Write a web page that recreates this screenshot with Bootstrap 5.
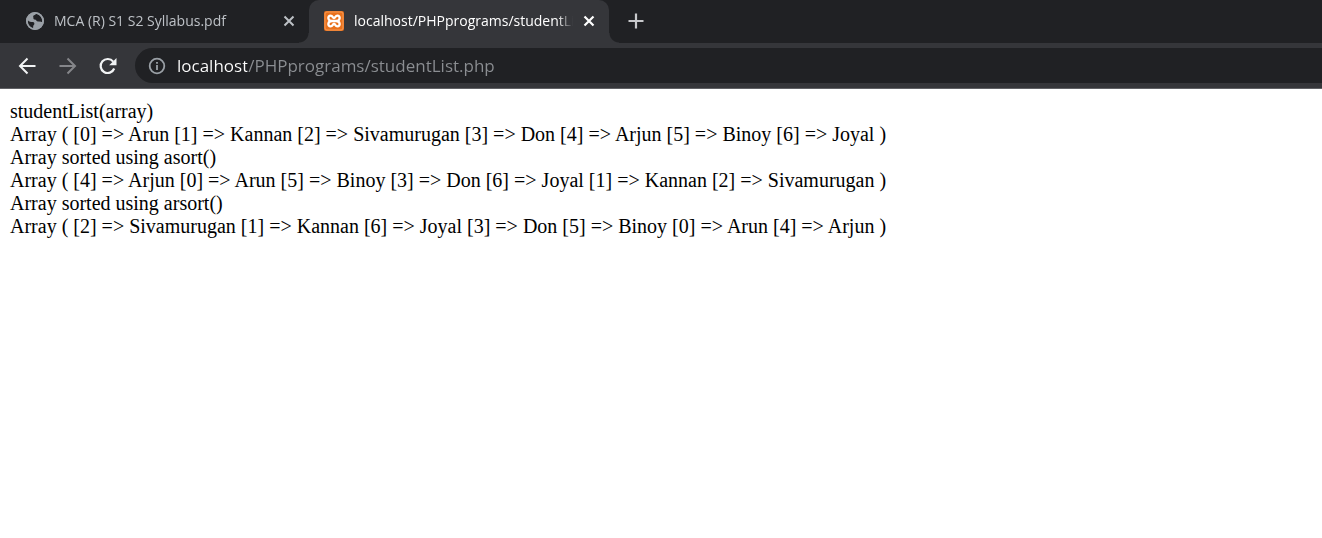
<!DOCTYPE html>
<html lang="en">
<head>
<meta charset="utf-8">
<meta name="viewport" content="width=device-width, initial-scale=1">
<title>localhost/PHPprograms/studentList.php</title>
<link href="https://cdn.jsdelivr.net/npm/bootstrap@5.3.0/dist/css/bootstrap.min.css" rel="stylesheet">
<style>
  :root { --strip: #202124; --toolbar: #35363a; }
  body { font-family: "Open Sans", "Noto Sans", sans-serif; color: #000; }
  .tab-strip { height: 43px; background: var(--strip); padding-left: 9px; }
  .browser-tab { position: relative; width: 300px; min-width: 0; height: 43px; padding: 0 10px 2px 15px; gap: 10px; color: #bdc1c6; }
  .browser-tab.current { background: var(--toolbar); border-radius: 10px 10px 0 0; color: #fff; }
  /* curved feet joining the current tab to the toolbar */
  .browser-tab.current::before, .browser-tab.current::after { content: ""; position: absolute; bottom: 0; width: 10px; height: 10px; }
  .browser-tab.current::before { right: 100%; background: radial-gradient(circle at 0 0, transparent 9px, var(--toolbar) 10px); }
  .browser-tab.current::after { left: 100%; background: radial-gradient(circle at 100% 0, transparent 9px, var(--toolbar) 10px); }
  .tab-title { min-width: 0; font-size: 14px; line-height: 20px; color: inherit; mask-image: linear-gradient(to left, transparent, #000 16px); -webkit-mask-image: linear-gradient(to left, transparent, #000 16px); }
  .icon-btn { padding: 0; border: 0; background: none; color: #f1f3f4; line-height: 0; flex: none; }
  .icon-btn:disabled { color: #85868a; }
  .tab-close { color: inherit; margin-left: -4px; }
  .new-tab { margin-left: 17px; padding-bottom: 2px; color: #c8c9cc; }
  .toolbar { height: 46px; background: var(--toolbar); border-bottom: 1px solid #606165; padding-left: 17px; gap: 20px; }
  .address { height: 35px; margin-left: -2px; padding-left: 13px; gap: 11px; background: var(--strip); border-radius: 18px 0 0 18px; color: #9aa0a6; }
  .address input { min-width: 0; padding: 0; border: 0; outline: 0; font-size: 17px; line-height: 24px;
    background: linear-gradient(to right, #fff 70px, #8b8e92 70px); -webkit-background-clip: text; background-clip: text; -webkit-text-fill-color: transparent; }
  .page-body { padding: 11px 10px; font-family: "Liberation Serif", serif; font-size: 20px; line-height: 23px; }
</style>
</head>
<body class="bg-white">
<header>
  <nav class="tab-strip d-flex align-items-center" aria-label="Tabs">
    <div class="browser-tab d-flex align-items-center">
      <svg class="flex-shrink-0" width="20" height="20" viewBox="0 0 20 20" aria-hidden="true">
        <circle cx="11" cy="10" r="9" fill="#9aa0a6"/>
        <path d="M3.800 9.200c1.400 1.800 3 1.900 5 1.900 1.500 0 1.700 1.300 1.500 2.200-.2.900-1.200 1-1.100 2.100.1.800-.2 1.600-.2 2C5.500 16.400 3.500 13.400 3.800 9.200zM12 2.700c-.4 1.400-1.900 1.300-2.600 2-.6.700.2 1.600 0 2.200-.2.800.4 1.500 1.400 1.500 1.500 0 1.500 2.300 3.400 2.200 1.500-.1 2.200.5 4 .4.5-4-2.200-7.600-6.200-8.300z" fill="#202124"/>
        <circle cx="11" cy="10" r="8.100" fill="none" stroke="#9aa0a6" stroke-width="1.700"/>
      </svg>
      <a href="#" class="tab-title text-decoration-none text-nowrap overflow-hidden flex-grow-1">MCA (R) S1 S2 Syllabus.pdf</a>
      <button class="icon-btn tab-close" type="button" aria-label="Close tab"><svg width="20" height="20" viewBox="0 0 20 20" fill="none" stroke="currentColor" stroke-width="2"><path d="M5.500 5.500l9 9M14.500 5.500l-9 9"/></svg></button>
    </div>
    <div class="browser-tab current d-flex align-items-center">
      <svg class="flex-shrink-0" width="20" height="20" viewBox="0 0 20 20" aria-hidden="true">
        <rect width="20" height="20" rx="2" fill="#e9711c"/>
        <rect x="1" y="1" width="18" height="18" rx="2" fill="none" stroke="#f59a55" stroke-width="1"/>
        <path d="M7.500 10H12.500M8 10C3.500 10 3.300 4.700 6.600 4.700c2.300 0 2 2.300 3.400 2.300s1.100-2.300 3.400-2.300c3.300 0 3.100 5.300-1.400 5.300M8 10c-4.500 0-4.700 5.300-1.400 5.300 2.300 0 2-2.300 3.400-2.300s1.100 2.300 3.400 2.300c3.300 0 3.100-5.300-1.400-5.300" fill="none" stroke="#fff" stroke-width="2.300" stroke-linejoin="round"/>
      </svg>
      <a href="#" aria-current="page" class="tab-title text-decoration-none text-nowrap overflow-hidden flex-grow-1">localhost/PHPprograms/studentList.php</a>
      <button class="icon-btn tab-close" type="button" aria-label="Close tab"><svg width="20" height="20" viewBox="0 0 20 20" fill="none" stroke="currentColor" stroke-width="2.200"><path d="M5.500 5.500l9 9M14.500 5.500l-9 9"/></svg></button>
    </div>
    <button class="icon-btn new-tab" type="button" aria-label="New tab"><svg width="20" height="20" viewBox="0 0 20 20" fill="none" stroke="currentColor" stroke-width="2.200"><path d="M10 2.500v15M2.500 10h15"/></svg></button>
  </nav>
  <div class="toolbar d-flex align-items-center">
    <button class="icon-btn" type="button" aria-label="Back"><svg width="20" height="20" viewBox="0 0 20 20" fill="none" stroke="currentColor" stroke-width="2"><path d="M18.500 10H3.500M10.500 2.500L3 10l7.500 7.500"/></svg></button>
    <button class="icon-btn" type="button" aria-label="Forward" disabled><svg width="20" height="20" viewBox="0 0 20 20" fill="none" stroke="currentColor" stroke-width="2"><path d="M2.500 10h15M10.500 2.500L18 10l-7.500 7.500"/></svg></button>
    <button class="icon-btn" type="button" aria-label="Reload"><svg width="20" height="20" viewBox="0 0 20 20" fill="none" stroke="currentColor" stroke-width="2.200"><path d="M17.200 12.500A7 7 0 1 1 16.200 5.700"/><path d="M19.500 2v7.300h-7.300z" fill="currentColor" stroke="none"/></svg></button>
    <form class="address d-flex align-items-center flex-grow-1" onsubmit="return false">
      <svg class="flex-shrink-0" width="18" height="18" viewBox="0 0 18 18" fill="none" stroke="currentColor" stroke-width="1.800" aria-hidden="true"><circle cx="9" cy="9" r="7.300"/><path d="M9 8v5M9 5v1.800"/></svg>
      <input class="flex-grow-1" type="text" aria-label="Address" spellcheck="false" value="localhost/PHPprograms/studentList.php">
    </form>
  </div>
</header>
<main class="page-body">
  <div>studentList(array)</div>
  <div>Array ( [0] =&gt; Arun [1] =&gt; Kannan [2] =&gt; Sivamurugan [3] =&gt; Don [4] =&gt; Arjun [5] =&gt; Binoy [6] =&gt; Joyal )</div>
  <div>Array sorted using asort()</div>
  <div>Array ( [4] =&gt; Arjun [0] =&gt; Arun [5] =&gt; Binoy [3] =&gt; Don [6] =&gt; Joyal [1] =&gt; Kannan [2] =&gt; Sivamurugan )</div>
  <div>Array sorted using arsort()</div>
  <div>Array ( [2] =&gt; Sivamurugan [1] =&gt; Kannan [6] =&gt; Joyal [3] =&gt; Don [5] =&gt; Binoy [0] =&gt; Arun [4] =&gt; Arjun )</div>
</main>
<script src="https://cdn.jsdelivr.net/npm/bootstrap@5.3.0/dist/js/bootstrap.bundle.min.js"></script>
</body>
</html>
